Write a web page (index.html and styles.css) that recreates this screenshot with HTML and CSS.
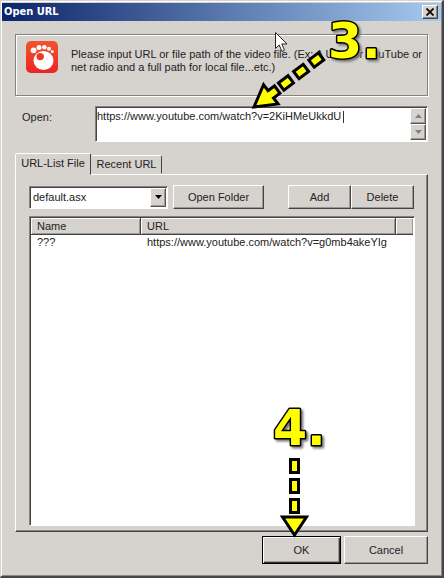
FILE: index.html
```html
<!DOCTYPE html>
<html lang="en">
<head>
<meta charset="utf-8">
<title>Open URL</title>
<link rel="stylesheet" href="styles.css">
</head>
<body>
<main class="dialog">
  <header class="titlebar">
    <h1>Open URL</h1>
    <button class="close" aria-label="Close"><svg width="8" height="8" viewBox="0 0 8 8"><path d="M0.5 0.5L7.5 7.5M7.5 0.5L0.5 7.5" stroke="#000" stroke-width="1.7"/></svg></button>
  </header>
  <div class="content">
    <section class="info">
      <svg class="logo" width="32" height="32" viewBox="0 0 32 32">
        <defs><linearGradient id="red" x1="0" y1="0" x2="0" y2="1"><stop offset="0" stop-color="#f0552b"/><stop offset="1" stop-color="#ec2424"/></linearGradient></defs>
        <rect width="32" height="32" rx="5" fill="url(#red)"/>
        <g fill="#fff"><ellipse cx="17.5" cy="19.500" rx="10" ry="9.600"/><circle cx="7.600" cy="9.300" r="2.900"/><circle cx="13" cy="6.400" r="2.500"/><circle cx="18.400" cy="6.200" r="2.300"/><circle cx="23" cy="7.800" r="2"/><circle cx="26.300" cy="10.600" r="1.500"/></g>
        <circle cx="14.200" cy="15.600" r="3.700" fill="#ed3927"/>
      </svg>
      <p>Please input URL or file path of the video file. (Ex: A URL for YouTube or<br>net radio and a full path for local file...etc.)</p>
    </section>
    <div class="open-row">
      <label for="url">Open:</label>
      <div class="url-field">
        <textarea id="url" spellcheck="false">https://www.youtube.com/watch?v=2KiHMeUkkdU</textarea>
        <span class="caret"></span>
        <div class="scroll">
          <button aria-label="Scroll up"><svg width="7" height="4" viewBox="0 0 7 4"><path d="M0 4L3.5 0L7 4Z" fill="#808080"/></svg></button>
          <button aria-label="Scroll down"><svg width="7" height="4" viewBox="0 0 7 4"><path d="M0 0L3.5 4L7 0Z" fill="#808080"/></svg></button>
        </div>
      </div>
    </div>
    <div class="tabs" role="tablist">
      <button class="tab active" role="tab" aria-selected="true">URL-List File</button>
      <button class="tab" role="tab" aria-selected="false">Recent URL</button>
    </div>
    <section class="panel" role="tabpanel">
      <div class="tools">
        <div class="combo">
          <select aria-label="List file"><option>default.asx</option></select>
          <span class="drop"><svg width="7" height="4" viewBox="0 0 7 4"><path d="M0 0L3.5 4L7 0Z"/></svg></span>
        </div>
        <button class="btn folder">Open Folder</button>
        <div class="pair"><button class="btn">Add</button><button class="btn">Delete</button></div>
      </div>
      <div class="list">
        <table>
          <colgroup><col class="c-name"><col><col class="c-end"></colgroup>
          <thead><tr><th>Name</th><th>URL</th><th></th></tr></thead>
          <tbody><tr><td>???</td><td colspan="2">https://www.youtube.com/watch?v=g0mb4akeYIg</td></tr></tbody>
        </table>
      </div>
    </section>
    <footer class="actions">
      <button class="btn ok">OK</button>
      <button class="btn cancel">Cancel</button>
    </footer>
  </div>
  <svg class="cursor" width="13" height="21" viewBox="0 0 13 21"><path d="M.5 .5V16.5L4.2 13L7 19.5L9.5 18.3L6.8 12H12Z" fill="#fff" stroke="#222"/></svg>
  <svg class="step step-three" width="60" height="50"><text x="3" y="42">3.</text></svg>
  <svg class="arrow arrow-three" width="80" height="66" viewBox="0 0 80 66">
    <g transform="translate(5 60) rotate(-37)" fill="#ff0" stroke="#000" stroke-width="3">
      <path d="M0 0L21 -12V-4.500H29V4.500H21V12Z"/>
      <path d="M34 -4.500H46V4.500H34ZM53 -4.500H65V4.500H53ZM72 -4.500H84V4.500H72Z"/>
    </g>
  </svg>
  <svg class="step step-four" width="60" height="50"><text x="3" y="42">4.</text></svg>
  <svg class="arrow arrow-four" width="32" height="82" viewBox="0 0 32 82">
    <g fill="#ff0" stroke="#000" stroke-width="3"><path d="M12.500 3.500H20.500V16.500H12.500ZM12.500 23.500H20.500V36.500H12.500ZM12.500 43.500H20.500V56.500H12.500Z"/><path d="M4.500 61H28.500L16.500 79Z"/></g>
  </svg>
</main>
</body>
</html>
```
FILE: styles.css
```css
* { box-sizing: border-box; }
body {
  margin: 0;
  background: #d6d2ce;
  color: #222;
  font: 11px/13px "Liberation Sans", Arial, sans-serif;
}
button, textarea, select { font: inherit; color: inherit; margin: 0; border-radius: 0; }
button { padding: 0; background: #d6d2ce; }
svg { display: block; flex: none; }

.dialog {
  position: relative;
  display: flex;
  flex-direction: column;
  min-height: 100vh;
  padding: 2px 1px 0;
  border: 1px solid #d6d2ce;
  border-right: 2px solid #48464a;
  border-bottom: 2px solid #48464a;
  box-shadow: inset 1px 1px #fff, inset -1px -1px #8b8986;
}
.titlebar {
  display: flex;
  align-items: center;
  justify-content: space-between;
  height: 18px;
  padding: 0 3px 0 2px;
  background: linear-gradient(90deg, #0b246a, #a6caf0);
}
.titlebar h1 {
  margin: 0;
  color: #fff;
  font: bold 11px/18px "DejaVu Sans Condensed", "DejaVu Sans", sans-serif;
}
.close {
  display: grid;
  place-items: center;
  width: 16px;
  height: 14px;
  border: 1px solid;
  border-color: #fff #444 #444 #fff;
  box-shadow: inset -1px -1px #888;
}
.content {
  display: flex;
  flex: 1;
  flex-direction: column;
  padding: 13px 13px 12px;
}
.info {
  display: flex;
  gap: 13px;
  height: 62px;
  padding: 6px 10px;
  border: 1px solid #858381;
  box-shadow: 1px 1px #fff, inset 1px 1px #fff;
}
.info p { margin: 7px 0 0; white-space: nowrap; }

.open-row { display: flex; margin-top: 10px; }
.open-row label { width: 80px; padding: 5px 0 0 7px; }
.url-field, .list, .combo {
  background: #fff;
  border: 1px solid;
  border-color: #858381 #fff #fff #858381;
  box-shadow: inset 1px 1px #444;
}
.url-field { position: relative; display: flex; flex: 1; height: 36px; padding: 1px; }
textarea {
  flex: 1;
  min-width: 0;
  padding: 2px 0;
  overflow: hidden;
  resize: none;
  border: 0;
  outline: 0;
  background: transparent;
}
.caret {
  position: absolute;
  left: 247px;
  top: 4px;
  width: 1px;
  height: 12px;
  background: #333;
}
.scroll { display: flex; flex-direction: column; width: 16px; }
.scroll button, .drop {
  display: grid;
  flex: 1;
  place-items: center;
  border: 1px solid;
  border-color: #fff #555 #555 #fff;
  box-shadow: inset -1px -1px #999;
}

.tabs { display: flex; align-items: flex-end; height: 22px; margin-top: 10px; }
.tab {
  height: 19px;
  width: 71px;
  border: 1px solid;
  border-color: #fff #444 transparent transparent;
  border-radius: 2px 2px 0 0;
}
.tab.active {
  z-index: 1;
  width: 76px;
  height: 22px;
  margin-bottom: -1px;
  padding-bottom: 2px;
  border-left-color: #fff;
}
.panel {
  display: flex;
  flex: 1;
  flex-direction: column;
  padding: 10px 12px 5px 13px;
  border: 1px solid;
  border-color: #fff #444 #444 #fff;
  box-shadow: inset -1px -1px #888;
}
.tools { display: flex; align-items: center; height: 24px; }
.btn {
  height: 24px;
  border: 1px solid;
  border-color: #fff #444 #444 #fff;
  box-shadow: inset -1px -1px #999;
}
.combo { display: flex; width: 139px; height: 23px; padding: 1px; }
.combo select {
  flex: 1;
  min-width: 0;
  padding: 0 2px;
  border: 0;
  appearance: none;
  background: transparent;
}
.drop { flex: 0 0 16px; background: #d6d2ce; }
.folder { width: 91px; margin-left: 5px; }
.pair { display: flex; margin: 0 1px 0 auto; }
.pair .btn { width: 63px; }
.list { flex: 1; margin-top: 7px; padding: 1px; }
table { width: 100%; border-collapse: separate; border-spacing: 0; table-layout: fixed; }
.c-name { width: 110px; }
.c-end { width: 17px; }
th, td { padding: 0 6px; text-align: left; font-weight: normal; white-space: nowrap; }
th {
  height: 17px;
  background: #d6d2ce;
  border: solid #444;
  border-width: 0 1px 1px 0;
  box-shadow: inset 1px 1px #fff, inset -1px -1px #999;
}
th:last-child { border-right: 0; }
td { height: 14px; }
.actions { display: flex; justify-content: flex-end; gap: 3px; margin-top: 4px; }
.actions .btn { height: 28px; }
.ok {
  width: 79px;
  border: 1px solid #000;
  box-shadow: inset 1px 1px #fff, inset -1px -1px #333, inset -2px -2px #999;
}
.cancel { width: 84px; }

.cursor, .step, .arrow { position: absolute; pointer-events: none; }
.cursor { left: 274px; top: 31px; }
.step {
  overflow: visible;
  font: bold 49px "DejaVu Sans", sans-serif;
  filter: drop-shadow(2px 2px 1px #777);
}
.step text {
  fill: #ff0;
  stroke: #000;
  stroke-width: 3px;
  stroke-linejoin: round;
  paint-order: stroke fill;
}
.step-three { left: 324px; top: 15px; }
.step-four { left: 269px; top: 402px; }
.arrow-three { left: 248px; top: 46px; }
.arrow-four { left: 277px; top: 455px; }
```
